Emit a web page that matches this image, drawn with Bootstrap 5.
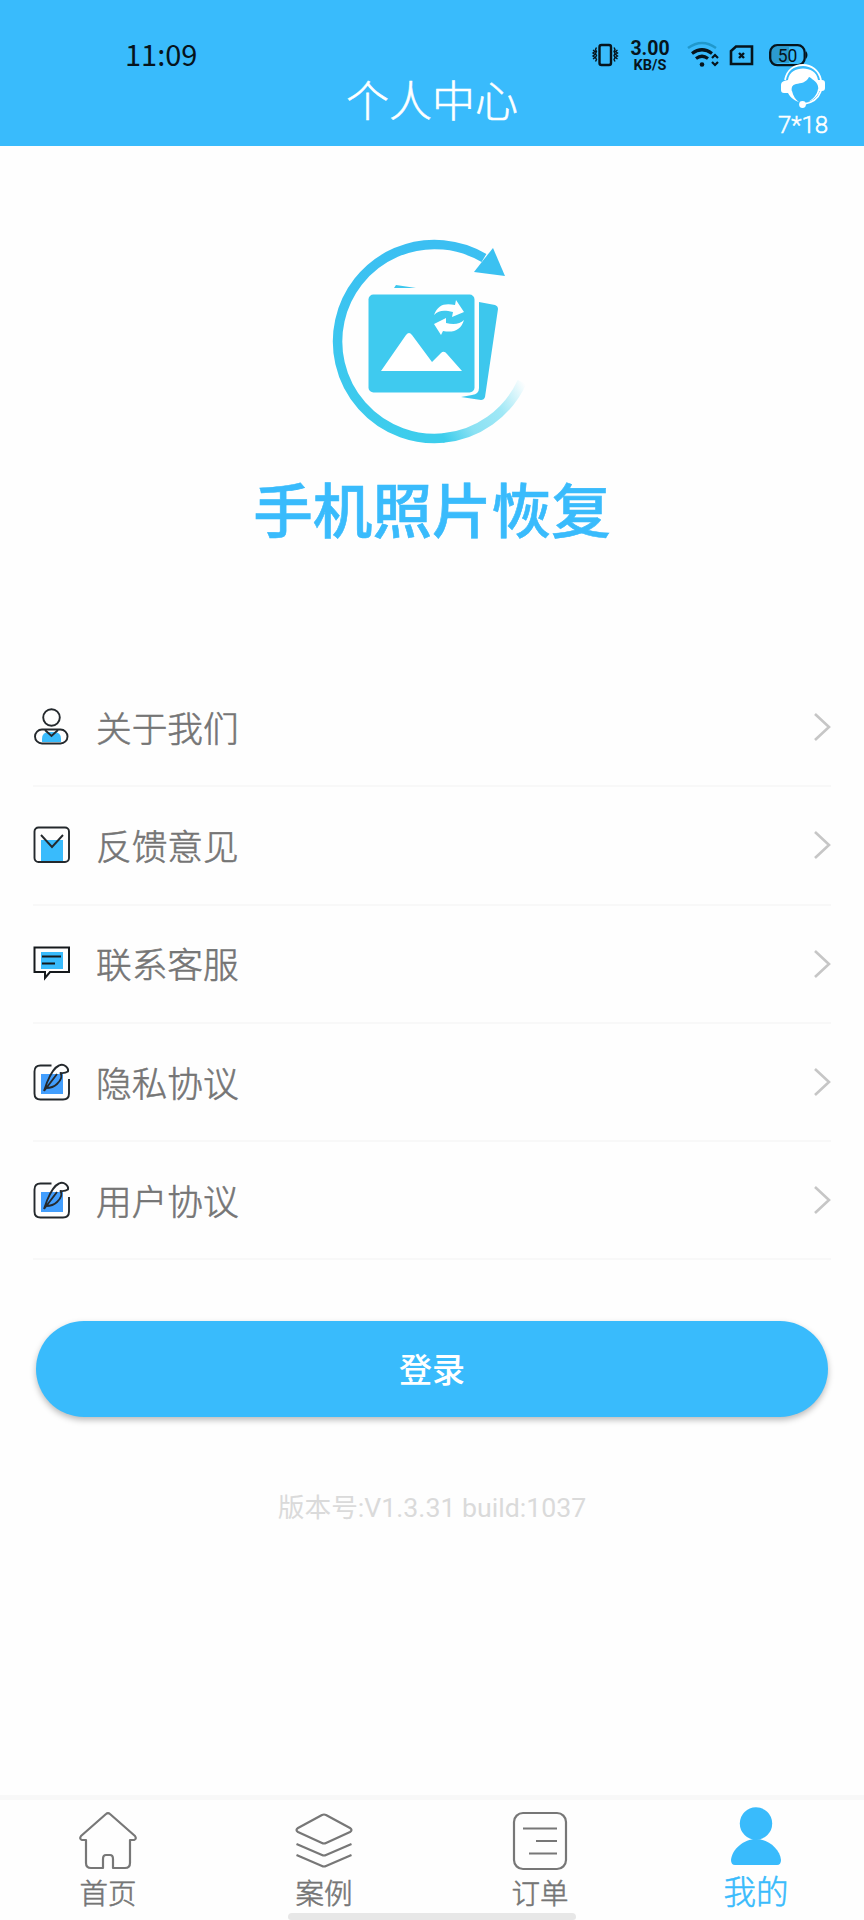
<!DOCTYPE html>
<html lang="zh-CN">
<head>
<meta charset="utf-8">
<meta name="viewport" content="width=device-width, initial-scale=1">
<title>个人中心</title>
<link href="https://cdn.jsdelivr.net/npm/bootstrap@5.3.0/dist/css/bootstrap.min.css" rel="stylesheet">
<style>
:root{--sky:#39bbfc}
body{font-family:Roboto,"Noto Sans CJK SC",sans-serif;color:#757575;background:#fefefe;height:1920px;overflow:hidden}
svg{display:block;flex:none;overflow:visible}
.topbar{background:var(--sky);height:146px}
.status{height:74px;padding:38px 54px 0 125px;color:#06141c}
.clock{font:400 29px/34px "Noto Sans CJK SC",sans-serif;width:466px;margin-top:-2px}
.rate{font-weight:700;width:42px;margin:0 16px 0 10px}
.rate-num{font-size:19.5px;line-height:21px}
.rate-unit{font-size:14.5px;line-height:14px}
.page-title{font-size:43px;line-height:50px;font-weight:300;color:#fff;padding-top:3px}
.thin{-webkit-text-stroke:.55px currentColor}
.service{top:63px;right:34px;width:54px;color:#fff}
.service-hours{font-size:24px;line-height:26px;font-weight:300;margin-top:3px}
.brand{height:523px;padding-top:94px}
.brand-name{font-size:59.6px;line-height:70px;font-weight:500;color:var(--sky);margin-top:34px;-webkit-text-stroke:.6px currentColor}
.menu{margin:0 33px}
.menu-row,.menu-row:last-child{height:118.3px;border:0;border-bottom:2px solid #f8f8f8 !important;background:none;padding:0;color:#757575}
.menu-label{font-size:35.7px;line-height:44px;font-weight:300;margin-left:25px;padding-top:5px}
.login{margin:61px 36px 0;height:96px;background:var(--sky);font-size:33px;font-weight:500;color:#fff;box-shadow:0 3px 6px rgba(0,0,0,.27);padding-top:8px}
.version{font-size:26.7px;line-height:34px;font-weight:400;color:#dadada;margin-top:74px}
.tabs{height:125px;border-top:5px solid #f8f8f8;background:#fefefe}
.tab{padding-top:9px}
.tab-label{font-size:28.5px;line-height:34px;font-weight:300;margin-top:7px}
.tab-on{color:var(--sky)}
.tab-on .tab-label{font-size:32.5px;margin-top:5px}
.home-bar{left:288px;bottom:0;width:288px;height:7px;background:#e7e7e7;border-radius:4px 4px 3px 3px}
</style>
</head>
<body class="d-flex flex-column position-relative">
<header class="topbar position-relative flex-shrink-0">
  <div class="status d-flex">
    <div class="clock">11:09</div>
    <svg width="28" height="34" fill="none" stroke="currentColor"><rect x="8.500" y="7" width="11.500" height="20" rx="2" stroke-width="2.400"/><path d="m2 12 2 1.500-2 1.500 2 1.500-2 1.500 2 1.500-2 1.500M5.500 9.500l-1 2 1 2-1 2 1 2-1 2 1 2-1 2M26.500 12l-2 1.500 2 1.500-2 1.500 2 1.500-2 1.500 2 1.500M23 9.500l1 2-1 2 1 2-1 2 1 2-1 2 1 2" stroke-width="1.400"/></svg>
    <div class="rate text-center"><div class="rate-num">3.00</div><div class="rate-unit">KB/S</div></div>
    <svg width="33" height="34" fill="none" stroke="currentColor"><path d="M1 10q14-10 28 0" stroke="#2098cc" stroke-width="2.500"/><path d="M5 15.500q10-7.500 20 0M9 20.500q6-4.500 12 0" stroke-width="3.200"/><circle cx="15" cy="26.500" r="2.300" fill="currentColor" stroke="none"/><path d="m25 20 3-3 3 3m-6 4 3 3 3-3" stroke-width="2.200"/></svg>
    <svg width="26" height="34" class="ms-2" fill="none" stroke="currentColor"><path d="M8 8.500h16v17.500H3V13z" stroke-width="2.600"/><path d="m11 15 5 5m0-5-5 5" stroke-width="2.400"/></svg>
    <svg width="42" height="34" style="margin-left:14px"><rect x="3" y="9" width="18" height="16" fill="#2b9bcf"/><rect x="2.200" y="7.200" width="34.500" height="20" rx="7" fill="none" stroke="currentColor" stroke-width="2.300"/><path d="M38 13q3 4 0 8z" fill="currentColor"/><text x="19.500" y="23.500" text-anchor="middle" font-size="17.500" fill="currentColor">50</text></svg>
  </div>
  <h1 class="page-title thin text-center m-0">个人中心</h1>
  <div class="service position-absolute d-flex flex-column align-items-center">
    <svg width="44" height="46" viewBox="0 0 44 46"><path d="M4 17C6 6 14 2 22 2s16 5 18 15M40 28c-3 8-9 12-17 13" fill="none" stroke="#fff" stroke-width="1.800"/><path d="M7 17C8 9 15 5.500 22 5.500S36 9 37 17h4q3 0 3 3v5q0 3-3 3h-4c1-5-1-9-6-12-1-1-2-2-3-2-3 6-8 6-13 7q-6 1-4 9H3q-3 0-3-3v-5q0-3 3-4zM6 28h5c1 5 4 9 7 11-6-2-10-6-12-11zM37 26h2c-1 6-6 11-12 13 5-3 9-7 10-13z" fill="#fff"/><circle cx="21.500" cy="41.500" r="3.400" fill="#fff"/></svg>
    <div class="service-hours thin">7*18</div>
  </div>
</header>

<section class="brand d-flex flex-column align-items-center flex-shrink-0">
  <svg width="220" height="204" viewBox="0 0 220 204">
    <defs><linearGradient id="ring" gradientUnits="userSpaceOnUse" x1="120" y1="195" x2="203" y2="144"><stop stop-color="#3dcdec"/><stop offset=".3" stop-color="#8be1f3"/><stop offset=".65" stop-color="#a0e8f6"/><stop offset="1" stop-color="#fefefe"/></linearGradient>
    <linearGradient id="arc" x1="0" y1="0" x2="0" y2="1"><stop stop-color="#3bbff2"/><stop offset="1" stop-color="#3dcdec"/></linearGradient></defs>
    <path d="M162 18A97 97 0 1 0 122 198" fill="none" stroke="url(#arc)" stroke-width="9.500"/>
    <path d="M121 198A97 97 0 0 0 200 142" fill="none" stroke="url(#ring)" stroke-width="9.500"/>
    <path d="m171 8 12 28-31-4 7-9z" fill="#3bc1f1"/>
    <path d="m72 48 2-3 20 3zM157 62l16 3q3 1 3 4l-13 88q-1 3-4 3l-20-3 11-2q7-1 7-7z" fill="#3dc7ed"/>
    <rect x="46.500" y="54.500" width="106" height="98" rx="5" fill="#3fcaef"/>
    <path d="m59 131 25-36q3-4 6 0l20 27 9-9q3-3 6 1l15 17z" fill="#fff"/>
    <path d="M112 75c4-10 10-12 21-10l1-5 8 12-12 5 1-5c-9-2-14-2-19 3zM142 80c-3 10-10 13-21 11l-2 4-7-11 12-6v5c8 2 14 1 18-3z" fill="#fff"/>
  </svg>
  <div class="brand-name">手机照片恢复</div>
</section>

<nav class="menu list-group list-group-flush flex-shrink-0">
  <a href="#" class="menu-row list-group-item d-flex align-items-center"><svg width="38" height="38" viewBox="0 0 38 38"><path d="M9 34v-3q0-7 7-7h5q7 0 7 7v3z" fill="var(--sky)"/><g fill="none" stroke="#24292d" stroke-width="1.900"><circle cx="18.500" cy="9.500" r="8.300"/><rect x="2" y="21.500" width="32.500" height="14" rx="7"/><path d="m12 22 6.500 6 6.500-6"/></g></svg><span class="menu-label thin">关于我们</span><svg class="ms-auto" width="18" height="30" fill="none" stroke="#c6c6c6" stroke-width="2.600"><path d="m2 2 14 13-14 13"/></svg></a>
  <a href="#" class="menu-row list-group-item d-flex align-items-center"><svg width="38" height="38" viewBox="0 0 38 38"><path d="M8 14h22v22H8z" fill="var(--sky)"/><g fill="none" stroke="#24292d" stroke-width="1.900"><rect x="1.500" y="1.500" width="34.500" height="34.500" rx="4"/><path d="m8 9 11 12L30 9"/></g></svg><span class="menu-label thin">反馈意见</span><svg class="ms-auto" width="18" height="30" fill="none" stroke="#c6c6c6" stroke-width="2.600"><path d="m2 2 14 13-14 13"/></svg></a>
  <a href="#" class="menu-row list-group-item d-flex align-items-center"><svg width="38" height="38" viewBox="0 0 38 38"><path d="M8 7h22v17H8z" fill="var(--sky)"/><g fill="none" stroke="#15191c" stroke-width="2"><path d="M1.500 2.500H36V27H17l-5 6v-6H1.500z"/><path d="M9 11.500h19M9 18.500h13"/></g></svg><span class="menu-label thin">联系客服</span><svg class="ms-auto" width="18" height="30" fill="none" stroke="#c6c6c6" stroke-width="2.600"><path d="m2 2 14 13-14 13"/></svg></a>
  <a href="#" class="menu-row list-group-item d-flex align-items-center"><svg width="38" height="38" viewBox="0 0 38 38"><path d="M8 11h22v20H8z" fill="#429efd"/><g fill="none" stroke="#24292d" stroke-width="1.900"><path d="M18.500 2.500H7.500q-6 0-6 6v22q0 6 6 6H30q6 0 6-6V16"/><path d="M11 28 24 11M11 28 14 19.500Q20 5 26 2.500C31 0 36 5 35 8.500q-3 2-7.500 1.500 3 5-3.500 11-4 4-11 4" stroke-linejoin="round"/></g></svg><span class="menu-label thin">隐私协议</span><svg class="ms-auto" width="18" height="30" fill="none" stroke="#c6c6c6" stroke-width="2.600"><path d="m2 2 14 13-14 13"/></svg></a>
  <a href="#" class="menu-row list-group-item d-flex align-items-center"><svg width="38" height="38" viewBox="0 0 38 38"><path d="M8 11h22v20H8z" fill="#429efd"/><g fill="none" stroke="#24292d" stroke-width="1.900"><path d="M18.500 2.500H7.500q-6 0-6 6v22q0 6 6 6H30q6 0 6-6V16"/><path d="M11 28 24 11M11 28 14 19.500Q20 5 26 2.500C31 0 36 5 35 8.500q-3 2-7.500 1.500 3 5-3.500 11-4 4-11 4" stroke-linejoin="round"/></g></svg><span class="menu-label thin">用户协议</span><svg class="ms-auto" width="18" height="30" fill="none" stroke="#c6c6c6" stroke-width="2.600"><path d="m2 2 14 13-14 13"/></svg></a>
</nav>

<button type="button" class="login btn rounded-pill border-0 flex-shrink-0">登录</button>
<div class="version text-center">版本号:V1.3.31 build:1037</div>

<footer class="tabs row g-0 mt-auto flex-shrink-0">
  <div class="tab col d-flex flex-column align-items-center"><svg width="60" height="62" fill="none" stroke="#777" stroke-width="2.200" stroke-linejoin="round"><path d="M28 5q2-2 4 0l25 22q2 3-1 4h-4v23q0 5-5 5H35V50q0-4-3-4h-4q-3 0-3 4v9h-12q-5 0-5-5V31H4q-3-1-1-4z"/></svg><div class="tab-label thin">首页</div></div>
  <div class="tab col d-flex flex-column align-items-center"><svg width="60" height="62" fill="none" stroke="#777" stroke-width="2.200" stroke-linejoin="round"><path d="M28 6q2-1 4 0l24 13q3 2 0 4L32 34q-2 1-4 0L4 23q-3-2 0-4zM2.500 35 28 46q2 1 4 0l25.500-11M2.500 46 28 57q2 1 4 0l25.500-11"/></svg><div class="tab-label thin">案例</div></div>
  <div class="tab col d-flex flex-column align-items-center"><svg width="60" height="62" fill="none" stroke="#777" stroke-width="2.200"><rect x="4" y="4" width="52" height="56" rx="9"/><path d="M13 19.500h34M26 32h21M19 44.500h28"/></svg><div class="tab-label thin">订单</div></div>
  <div class="tab tab-on col d-flex flex-column align-items-center"><svg width="60" height="62" fill="currentColor"><circle cx="30" cy="14.500" r="16.200"/><path d="M5 51c1-11 13-21 25-21s24 10 25 21q0 5-4 5H9q-4 0-4-5z"/></svg><div class="tab-label thin">我的</div></div>
</footer>
<div class="home-bar position-absolute"></div>
<script src="https://cdn.jsdelivr.net/npm/bootstrap@5.3.0/dist/js/bootstrap.bundle.min.js"></script>
</body>
</html>
